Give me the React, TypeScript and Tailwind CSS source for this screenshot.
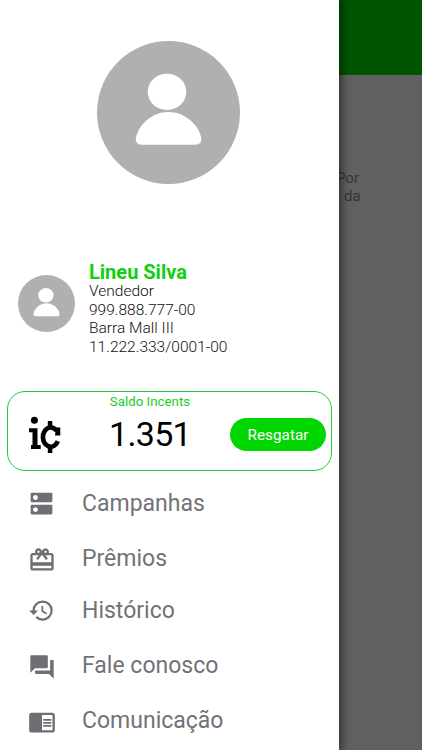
import type { IconType } from 'react-icons';
import { MdCardGiftcard, MdChromeReaderMode, MdDns, MdForum, MdHistory } from 'react-icons/md';

interface MenuItem {
  label: string;
  icon: IconType;
  row: string;
  iconSize: string;
}

const MENU: MenuItem[] = [
  { label: 'Campanhas', icon: MdDns, row: 'h-[54px]', iconSize: 'size-[29px]' },
  { label: 'Prêmios', icon: MdCardGiftcard, row: 'h-[56px]', iconSize: 'size-[28px] mt-[3px]' },
  { label: 'Histórico', icon: MdHistory, row: 'h-[48px]', iconSize: 'size-[27px] mt-[1px]' },
  { label: 'Fale conosco', icon: MdForum, row: 'h-[62px]', iconSize: 'size-[28px] mt-[4px]' },
  { label: 'Comunicação', icon: MdChromeReaderMode, row: 'h-[48px]', iconSize: 'size-[28px] mt-[3px]' },
];

function Avatar({ className }: { className: string }) {
  return (
    <svg viewBox="0 0 142 142" className={className}>
      <circle cx="71" cy="71" r="71" fill="#b0b0b0" />
      <ellipse cx="69.5" cy="50.500" rx="19.2" ry="18" fill="#fff" />
      <path d="M71 70.5C54 70.5 41 84 38.5 96.500Q38 103 45 103H97Q104.500 103 103.500 96C101 84 88 70.500 71 70.500Z" fill="#fff" />
    </svg>
  );
}

function IncentsLogo() {
  return (
    <svg viewBox="0 0 34 38" className="h-[38px] w-[34px]">
      <circle cx="6.400" cy="4.200" r="3.500" />
      <path d="M1 12.300H9.500V29H12.700V33H3V29H4.500V16.200H1Z" />
      <path d="M28.800 15A7.800 9.600 0 1 0 29.800 25.200" fill="none" stroke="#000" strokeWidth="4.600" />
      <path d="M19.800 5H24.300V11H19.800ZM19.800 31H24.300V37H19.800ZM28 11.500H32.300V19.500H27Z" />
    </svg>
  );
}

export default function App() {
  return (
    <div className="relative h-[750px] w-[422px] overflow-hidden bg-[#606060] font-['Roboto',sans-serif]">
      <div className="h-[75px] bg-[#005600]" />
      <div className="flex flex-col pt-[95px] pl-[336px] text-[15px] leading-[17.500px] text-[#363636]">
        <span>Por</span>
        <span className="pl-2">da</span>
      </div>

      <aside className="absolute inset-y-0 left-0 flex w-[339px] flex-col bg-white shadow-[0_0_9px_2px_rgba(0,0,0,0.6)]">
        <div className="pt-[41px] pl-[97px]">
          <Avatar className="size-[143px]" />
        </div>

        <div className="mt-[77px] flex h-[96px] pl-[18px]">
          <Avatar className="mt-[14px] size-[57px]" />
          <div className="ml-[14px] flex flex-col text-[15.500px] leading-[18.500px] font-light text-[#111]">
            <p className="pt-[1px] text-[20px] leading-[20px] font-bold text-[#10d010]">Lineu Silva</p>
            <p>Vendedor</p>
            <p>999.888.777-00</p>
            <p>Barra Mall III</p>
            <p>11.222.333/0001-00</p>
          </div>
        </div>

        <div className="mt-[34px] ml-[7px] flex h-[80px] w-[325px] shrink-0 rounded-[18px] border border-[#22c832]">
          <div className="mt-[24px] ml-[20px]">
            <IncentsLogo />
          </div>
          <div className="ml-[28px] flex w-[120px] flex-col items-center text-black">
            <p className="mt-[1px] text-[13.300px] leading-[17px] text-[#18cc28]">Saldo Incents</p>
            <p className="text-[34px] leading-[49px] tracking-[-0.700px]">1.351</p>
          </div>
          <button className="mt-[26px] ml-[20px] h-[33px] w-[96px] rounded-full bg-[#00d600] pt-[1px] text-[15.300px] text-white">Resgatar</button>
        </div>

        <nav className="mt-[5px] flex flex-col">
          {MENU.map(({ label, icon: Icon, row, iconSize }) => (
            <a key={label} className={`flex shrink-0 items-center ${row}`}>
              <span className="flex w-[82px] justify-center pl-[1px]">
                <Icon className={`${iconSize} text-[#6e6e73]`} />
              </span>
              <span className="pt-[2px] text-[23px] leading-7 text-[#727277]">{label}</span>
            </a>
          ))}
        </nav>
      </aside>
    </div>
  );
}
